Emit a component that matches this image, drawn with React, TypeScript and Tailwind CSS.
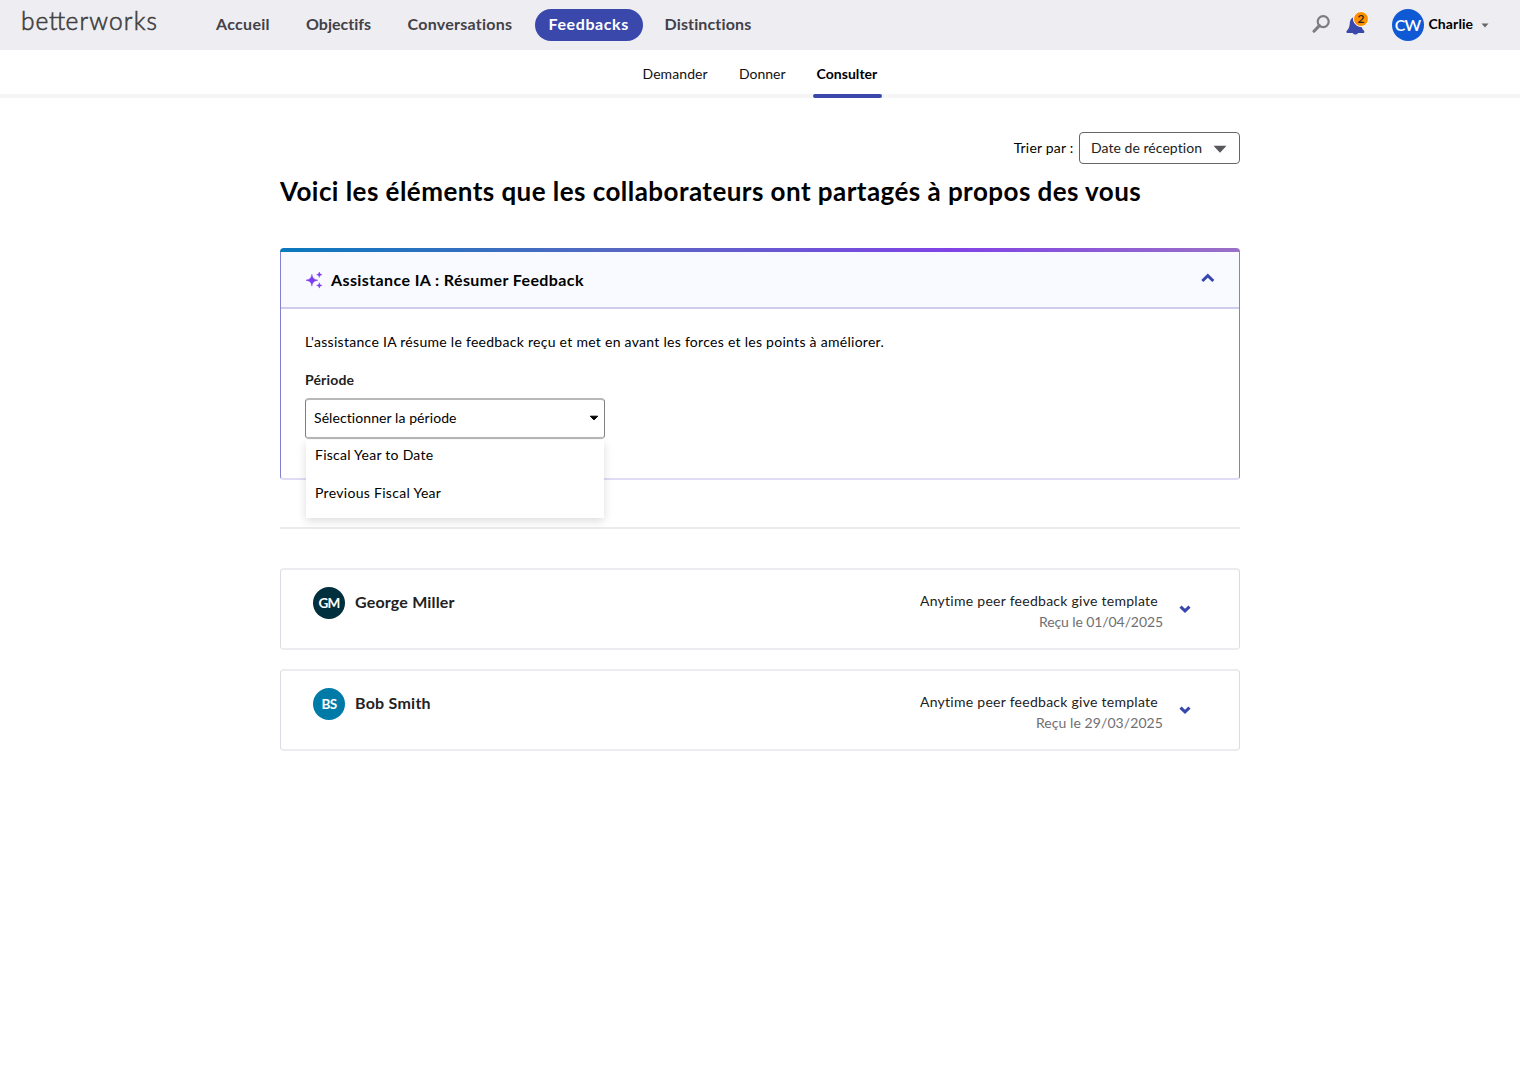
import type { ReactNode } from "react";

function NavItem({ className, children }: { className: string; children: ReactNode }) {
  return <a className={`block whitespace-nowrap text-[16px] leading-5 font-bold ${className}`}>{children}</a>;
}

function Header() {
  return (
    <header className="flex h-[50px] items-start bg-[#eeedf2] text-[#424147]">
      <div className="ml-[21px] w-[193px] whitespace-nowrap pt-[6px] text-[24.5px] leading-[30px] font-light text-[#3f3f41] [-webkit-text-stroke:0.6px_#3f3f41]">
        <span className="tracking-[0.9px]">b</span>
        <span className="tracking-[0.8px]">e</span>
        <span className="tracking-[-0.6px]">tt</span>
        <span className="ml-[1px] tracking-[1.15px]">erworks</span>
      </div>
      <nav className="flex h-[50px] items-center">
        <NavItem className="mt-[-2px] ml-[2px] w-[90px] tracking-[0.3px]">Accueil</NavItem>
        <NavItem className="mt-[-2px] w-[101.5px] tracking-[0.02px]">Objectifs</NavItem>
        <NavItem className="mt-[-2px] w-[127.5px] tracking-[0.26px]">Conversations</NavItem>
        <div className="flex h-8 w-[108px] items-center rounded-full bg-[#3a48ac] pl-[13.5px] text-white">
          <NavItem className="mt-[-2px] tracking-[0.6px]">Feedbacks</NavItem>
        </div>
        <NavItem className="mt-[-2px] ml-[21.5px] tracking-[0.14px]">Distinctions</NavItem>
      </nav>
      <div className="ml-auto flex h-[50px] items-center">
        <svg className="mt-[-2px] mr-[15px] h-[18px] w-[18px]" viewBox="0 0 18 18" fill="none" stroke="#7d7d80" strokeWidth="2.2">
          <circle cx="11.2" cy="6.6" r="5.5" />
          <path d="M7.4 10.6 2 16.2" strokeWidth="3" strokeLinecap="round" />
        </svg>
        <div className="relative h-[50px] w-[24px]">
          <svg className="absolute top-[16px] left-[0.5px] h-[20px] w-[19px]" viewBox="0 0 19 20" fill="#3a48ac">
            <path d="M9.3 1C6 1 4.1 3.5 3.8 7.2 3.6 10.6 2.8 12.5.8 14.7.1 15.6.3 17 1.300 17h5.500a2.700 2.200 0 0 0 5.200 0h5.500c1 0 1.200-1.400.5-2.300-2-2.200-2.900-4.100-3.100-7.500C14.600 3.500 12.600 1 9.300 1Z" />
          </svg>
          <span className="absolute top-[11px] left-[8px] flex h-4 w-4 items-center justify-center rounded-full border border-white bg-[#ff9100] text-[12px] leading-none font-semibold text-[#222]">2</span>
        </div>
        <div className="ml-[22.5px] flex h-[32px] w-[32px] items-center justify-center rounded-full bg-[#0f5ad4] text-[16px] leading-none font-semibold tracking-[-1px] text-white">CW</div>
        <span className="mt-[-2px] ml-[5px] w-[52.5px] text-sm font-bold tracking-[0.1px] text-black">Charlie</span>
        <svg className="mr-[31px] h-[5px] w-[8px]" viewBox="0 0 8 5" fill="#67676b">
          <path d="M.5.5h7L4 4.6Z" />
        </svg>
      </div>
    </header>
  );
}

function SubNav() {
  return (
    <div className="relative flex h-[48px] border-b-4 border-[#f5f5f5] pt-[14px] pl-[642.5px] text-sm leading-5 text-[#111]">
      <a className="w-[96.5px] tracking-[0.08px]">Demander</a>
      <a className="w-[77.5px] tracking-[0px]">Donner</a>
      <a className="font-bold tracking-[0.05px] text-black">Consulter</a>
      <div className="absolute bottom-[-4px] left-[813px] h-[4px] w-[68.5px] rounded-[2px] bg-[#3a48ac]" />
    </div>
  );
}

function Chevron({ up = false }: { up?: boolean }) {
  return up ? (
    <svg className="h-[10px] w-[14px]" viewBox="0 0 14 10" fill="none" stroke="#3847ad" strokeWidth="3">
      <path d="M1.3 8 6.8 2.7l5.500 5.300" strokeLinejoin="miter" />
    </svg>
  ) : (
    <svg className="h-[8px] w-[12px]" viewBox="0 0 12 8" fill="none" stroke="#3847ad" strokeWidth="3">
      <path d="M1.5 1.600 6 5.900l4.500-4.300" />
    </svg>
  );
}

function PeriodSelect() {
  return (
    <div className="relative w-[300px]">
      <div className="flex h-[41px] items-center justify-between rounded-[4px] border-x border-y-2 border-x-[#808080] border-y-[#b8b8b8] pr-[5px] pl-[8px] text-sm text-black">
        <span className="mt-[-1px] tracking-[0.08px]">Sélectionner la période</span>
        <svg className="mt-[-1px] h-[6px] w-[10px]" viewBox="0 0 10 6">
          <path d="M1.3 1.200h7.400L5 4.900Z" stroke="#000" strokeLinejoin="round" />
        </svg>
      </div>
      <div className="absolute top-[42px] left-[1px] z-10 h-[78px] w-[298px] bg-white pt-[5px] pl-[9px] text-sm leading-5 text-black shadow-[0_3px_9px_rgba(0,0,0,0.14)]">
        <div className="h-[38px] tracking-[0.26px]">Fiscal Year to Date</div>
        <div className="tracking-[0.3px]">Previous Fiscal Year</div>
      </div>
    </div>
  );
}

function AssistCard() {
  return (
    <section className="mt-[38px] h-[232px]">
      <div className="h-[4px] rounded-t-[4px] bg-[linear-gradient(90deg,#0a78be_0%,#5668c2_35%,#8043e6_70%,#9a70c6_100%)]" />
      <div className="h-[228px] rounded-b-[4px] border-x border-b-2 border-x-[#8380cf] border-b-[#dfdcf5]">
        <div className="flex h-[57px] items-center border-b-2 border-[#cecdef] bg-[#f9faff] pr-[24px] pl-[24px]">
          <svg className="h-[18px] w-[18px]" viewBox="0 0 18 18" fill="#7a3df0">
            <path d="M6.9 3.2C7.8 7.300 8.600 8.100 12.900 9.200 8.600 10.300 7.800 11.100 6.900 15.200 6 11.100 5.200 10.300.9 9.200 5.200 8.100 6 7.300 6.900 3.200Z" stroke="#7a3df0" strokeWidth=".4" />
            <path d="M14.300 1c.4 1.800.9 2.300 2.700 2.700-1.800.4-2.300.9-2.700 2.700-.4-1.800-.9-2.300-2.700-2.700 1.800-.4 2.300-.9 2.700-2.700Z" stroke="#7a3df0" strokeWidth=".5" />
            <path d="M14.300 11.700c.4 1.800.9 2.300 2.700 2.700-1.800.4-2.300.9-2.700 2.700-.4-1.800-.9-2.300-2.700-2.700 1.800-.4 2.300-.9 2.700-2.700Z" stroke="#7a3df0" strokeWidth=".5" />
          </svg>
          <h2 className="ml-[8px] text-[16px] leading-5 font-bold tracking-[0.39px] text-black">Assistance IA : Résumer Feedback</h2>
          <div className="mt-[-4px] ml-auto">
            <Chevron up />
          </div>
        </div>
        <div className="pt-[23px] pl-[24px]">
          <p className="text-sm leading-5 tracking-[0.28px] text-black">
            L'assistance IA résume le feedback reçu et met en avant les forces et les points à améliorer.
          </p>
          <p className="mt-[18px] mb-[8px] text-sm leading-5 font-bold tracking-[0.15px] text-[#222]">Période</p>
          <PeriodSelect />
        </div>
      </div>
    </section>
  );
}

interface Feedback {
  initials: string;
  avatar: string;
  name: ReactNode;
  date: ReactNode;
}

const feedbacks: Feedback[] = [
  {
    initials: "GM",
    avatar: "bg-[#002f3d]",
    name: <span className="tracking-[0.18px]">George Miller</span>,
    date: <span className="tracking-[-0.09px]">Reçu le 01/04/2025</span>,
  },
  {
    initials: "BS",
    avatar: "bg-[#007ba8]",
    name: <span className="tracking-[0.25px]">Bob Smith</span>,
    date: <span className="tracking-[0.08px]">Reçu le 29/03/2025</span>,
  },
];

function FeedbackCard({ item }: { item: Feedback }) {
  return (
    <article className="flex h-[82px] items-start rounded-[4px] border-x border-y-2 border-x-[#dcdce2] border-y-[#ebebf0] pr-[48px] pl-[32px]">
      <div className={`mt-[17.4px] flex h-[32px] w-[32px] items-center justify-center rounded-full text-[13.5px] leading-none font-bold tracking-[-0.7px] text-white ${item.avatar}`}>
        {item.initials}
      </div>
      <div className="mt-[22px] ml-[10px] text-[16px] leading-5 font-bold text-[#222]">{item.name}</div>
      <div className="mt-[20px] ml-auto w-[260px] text-right text-sm leading-[21px]">
        <div className="mr-[5px] tracking-[0.27px] text-[#222]">Anytime peer feedback give template</div>
        <div className="text-[#6f6f73]">{item.date}</div>
      </div>
      <div className="mt-[35px] ml-[16px]">
        <Chevron />
      </div>
    </article>
  );
}

export default function App() {
  return (
    <div className="min-h-screen bg-white font-['Lato',sans-serif] [font-variant-ligatures:none]">
      <Header />
      <SubNav />
      <main className="mx-auto w-[960px] pt-[34px]">
        <div className="flex items-center justify-end text-sm leading-5 text-black">
          <span className="mr-[5.5px] tracking-[0.2px]">Trier par :</span>
          <div className="flex h-[32px] w-[161px] items-center justify-between rounded-[4px] border border-[#666] pr-[12px] pl-[11px]">
            <span className="tracking-[0.05px] text-[#222]">Date de réception</span>
            <svg className="mt-[2px] h-[8px] w-[14px]" viewBox="0 0 14 8" fill="#58585c">
              <path d="M.5.7h13L7 7.8Z" />
            </svg>
          </div>
        </div>
        <h1 className="mt-[9px] h-[37px] whitespace-nowrap text-[26px] leading-[37px] font-bold tracking-[0.45px] text-black">
          Voici les éléments que les collaborateurs ont partagés à propos des vous
        </h1>
        <AssistCard />
        <hr className="mt-[47px] border-t-2 border-[#ebebed]" />
        <div className="mt-[39px] flex flex-col gap-[19px]">
          {feedbacks.map((f) => (
            <FeedbackCard key={f.initials} item={f} />
          ))}
        </div>
      </main>
    </div>
  );
}
